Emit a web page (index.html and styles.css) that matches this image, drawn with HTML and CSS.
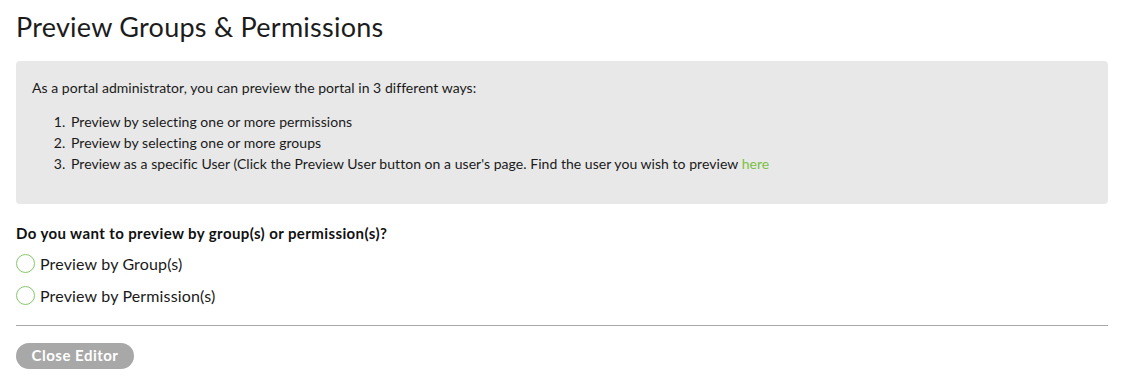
FILE: index.html
```html
<!DOCTYPE html>
<html>
<head>
<meta charset="utf-8">
<link rel="stylesheet" href="styles.css">
</head>
<body>
<div class="page">
  <h1 class="title">Preview Groups &amp; Permissions</h1>
  <div class="info">
    <p class="intro">As a portal administrator, you can preview the portal in 3 different ways:</p>
    <ol class="ways">
      <li>Preview by selecting one or more permissions</li>
      <li>Preview by selecting one or more groups</li>
      <li>Preview as a specific User (Click the Preview User button on a user's page. Find the user you wish to preview <a class="link" href="#">here</a></li>
    </ol>
  </div>
  <p class="question">Do you want to preview by group(s) or permission(s)?</p>
  <label class="radio"><span class="circle"></span><span>Preview by Group(s)</span></label>
  <label class="radio"><span class="circle"></span><span>Preview by Permission(s)</span></label>
  <hr class="rule">
  <button class="close">Close Editor</button>
</div>
</body>
</html>
```
FILE: styles.css
```css
html, body { margin: 0; padding: 0; background: #fff; }
body { font-family: Lato, "Noto Sans", sans-serif; color: #1a1a1a; }
.page { padding: 0 16px; width: 1092px; }
.title { margin: 0; padding-top: 12px; font-size: 27px; font-weight: 400; line-height: 30px; color: #1c1c1c; letter-spacing: 0.25px; }
.info { margin-top: 19px; background: #e8e8e8; border-radius: 4px; padding: 18px 16px 23px 16px; height: 102px; font-size: 14px; letter-spacing: 0.04px; }
.intro { margin: 0; line-height: 18px; }
.ways { margin: 14px 0 0 0; padding-left: 37px; }
.ways li { line-height: 21px; padding-left: 2px; }
.link { color: #7ac143; text-decoration: none; }
.question { margin: 20px 0 0 0; font-size: 15px; font-weight: 700; line-height: 18px; color: #111; letter-spacing: 0.4px; }
.radio { display: flex; align-items: center; gap: 5px; margin-top: 11px; font-size: 16px; height: 20px; letter-spacing: 0.15px; }
.radio + .radio { margin-top: 12px; }
.circle { width: 17px; height: 17px; border: 1.5px solid #86c86a; border-radius: 50%; box-sizing: content-box; flex: none; }
.rule { margin: 20px 0 0 0; border: 0; border-top: 1px solid #a9a9a9; }
.close { display: block; margin-top: 17px; background: #a8a8a8; color: #fff; border: 0; border-radius: 13px; height: 26px; width: 118px; font-family: inherit; font-size: 15px; font-weight: 700; letter-spacing: 0.5px; padding: 0 0 2px 0; }
```
